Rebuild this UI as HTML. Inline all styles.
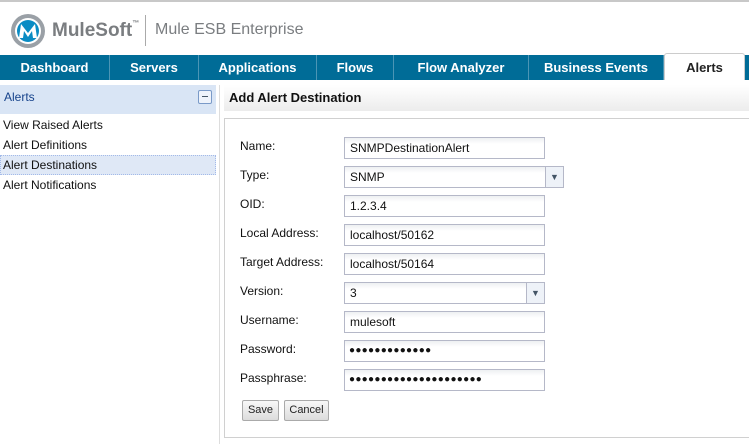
<!DOCTYPE html>
<html><head><style>
*{box-sizing:border-box;margin:0;padding:0}
body{width:749px;height:444px;overflow:hidden;background:#fff;font-family:"Liberation Sans",sans-serif;font-size:12px;color:#111;position:relative}
.abs{position:absolute}
.tab{position:absolute;top:55px;height:25px;color:#fff;font-weight:bold;font-size:13px;text-align:center;line-height:25px;border-right:1px solid #4b95b5}
.lbl{position:absolute;left:240px;font-size:12px}
.inp{position:absolute;left:344px;width:201px;height:22px;border:1px solid #b5b8c8;background:linear-gradient(#eef0f2,#fff 6px);padding-left:5px;line-height:20px;font-size:12px}
.dots{font-size:10px;letter-spacing:0.3px;padding-left:4px}
.btn{position:absolute;top:400px;height:21px;border:1px solid #aaa;border-radius:2px;background:linear-gradient(#f8f8f8,#dcdcdc);font-size:11px;line-height:19px;text-align:center;color:#222}
</style></head><body>
<div class="abs" style="left:0;top:0;width:749px;height:2px;background:#c8c8c8"></div>
<svg class="abs" style="left:10px;top:13px" width="36" height="36" viewBox="0 0 36 36"><circle cx="18" cy="18" r="17" fill="#9aa0a6"/><circle cx="18" cy="18" r="13" fill="#fff"/><circle cx="18" cy="18" r="11" fill="#0a8cc4"/><path d="M9 25 L11 11 L18 20 L25 11 L27 25 L23 25 L22 18 L18 24 L14 18 L13 25Z" fill="#fff"/></svg>
<div class="abs" style="left:52px;top:20px;font-size:19px;font-weight:bold;color:#7a7d80">MuleSoft<span style="font-size:7px;vertical-align:top">™</span></div>
<div class="abs" style="left:145px;top:15px;width:1px;height:31px;background:#aaa"></div>
<div class="abs" style="left:155px;top:21px;font-size:16px;color:#7a7d80">Mule ESB Enterprise</div>
<div class="abs" style="left:0;top:55px;width:749px;height:25px;background:#006c97"></div>
<div class="tab" style="left:0;width:110px">Dashboard</div>
<div class="tab" style="left:110px;width:89px">Servers</div>
<div class="tab" style="left:199px;width:118px">Applications</div>
<div class="tab" style="left:317px;width:77px">Flows</div>
<div class="tab" style="left:394px;width:135px">Flow Analyzer</div>
<div class="tab" style="left:529px;width:135px">Business Events</div>
<div class="abs" style="left:664px;top:53px;width:81px;height:27px;background:#fff;border:1px solid #ccc;border-bottom:none;border-radius:3px 3px 0 0;text-align:center;line-height:27px;font-weight:bold;font-size:13px;color:#222">Alerts</div>
<div class="abs" style="left:0;top:85px;width:216px;height:29px;background:#d9e5f5;padding:5px 4px;font-size:12px;color:#15428b">Alerts</div>
<div class="abs" style="left:198px;top:90px;width:14px;height:14px;border:1px solid #7a9ac8;border-radius:2px;background:#eef3fb"><div style="margin:5px 3px;height:1px;background:#456"></div></div>
<div class="abs" style="left:219px;top:85px;width:1px;height:359px;background:#ddd"></div>
<div class="abs" style="left:3px;top:118px">View Raised Alerts</div>
<div class="abs" style="left:3px;top:138px">Alert Definitions</div>
<div class="abs" style="left:0;top:155px;width:216px;height:20px;background:#dfe8f6;border:1px dotted #a3bae9"></div>
<div class="abs" style="left:3px;top:158px">Alert Destinations</div>
<div class="abs" style="left:3px;top:178px">Alert Notifications</div>
<div class="abs" style="left:224px;top:85px;width:525px;height:26px;background:linear-gradient(#fff,#ececec);padding:5px;font-weight:bold;font-size:13px">Add Alert Destination</div>
<div class="abs" style="left:224px;top:118px;width:525px;height:320px;border:1px solid #d0d0d0;border-right:none"></div>
<div class="lbl" style="top:139px">Name:</div><div class="inp" style="top:137px">SNMPDestinationAlert</div>
<div class="lbl" style="top:168px">Type:</div><div class="inp" style="top:166px;width:220px">SNMP<div class="abs" style="right:0;top:0;width:18px;height:20px;border-left:1px solid #b5b8c8;background:#eef2f8;color:#456;font-size:9px;text-align:center">▼</div></div>
<div class="lbl" style="top:197px">OID:</div><div class="inp" style="top:195px">1.2.3.4</div>
<div class="lbl" style="top:226px">Local Address:</div><div class="inp" style="top:224px">localhost/50162</div>
<div class="lbl" style="top:255px">Target Address:</div><div class="inp" style="top:253px">localhost/50164</div>
<div class="lbl" style="top:284px">Version:</div><div class="inp" style="top:282px;width:201px">3<div class="abs" style="right:0;top:0;width:18px;height:20px;border-left:1px solid #b5b8c8;background:#eef2f8;color:#456;font-size:9px;text-align:center">▼</div></div>
<div class="lbl" style="top:313px">Username:</div><div class="inp" style="top:311px">mulesoft</div>
<div class="lbl" style="top:342px">Password:</div><div class="inp dots" style="top:340px">●●●●●●●●●●●●●</div>
<div class="lbl" style="top:371px">Passphrase:</div><div class="inp dots" style="top:369px">●●●●●●●●●●●●●●●●●●●●●</div>
<div class="btn" style="left:242px;width:37px">Save</div>
<div class="btn" style="left:284px;width:45px">Cancel</div>
</body></html>
